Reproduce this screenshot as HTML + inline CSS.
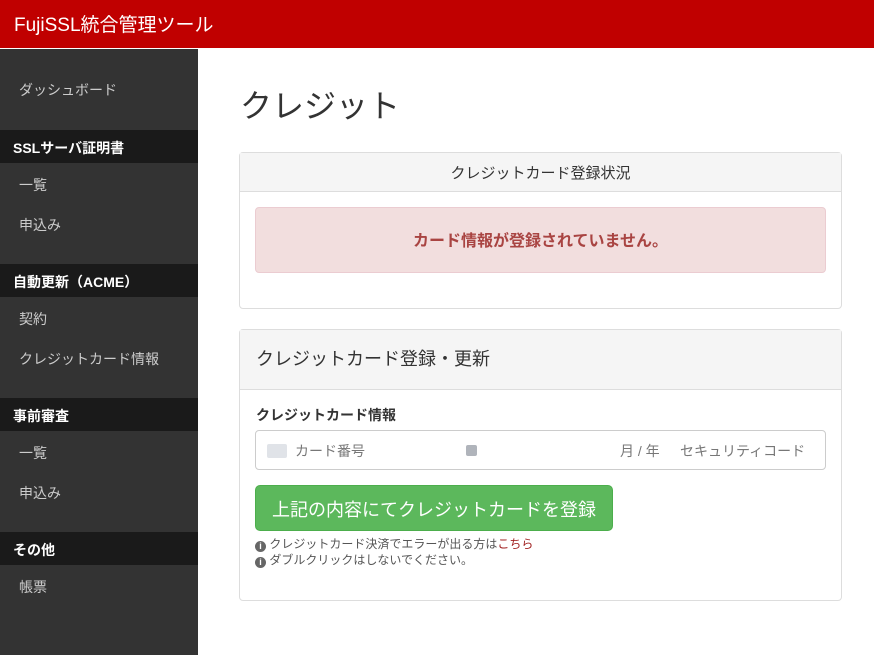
<!DOCTYPE html>
<html><head><meta charset="utf-8"><style>
*{box-sizing:border-box;margin:0;padding:0}
body{width:874px;height:655px;overflow:hidden;font-family:"Liberation Sans","Noto Sans CJK JP",sans-serif;background:#fff;color:#333;position:relative}
.top{position:absolute;left:0;top:0;width:874px;height:48px;background:#c00000;color:#fff;font-size:19px;padding:10px 0 0 14px}
.side{position:absolute;left:0;top:49px;width:198px;height:606px;background:#333}
.si{position:absolute;left:19px;color:#ccc;font-size:14px}
.sh{position:absolute;left:0;width:198px;height:33px;background:#1a1a1a;color:#fff;font-size:14px;font-weight:bold;padding:8px 0 0 13px}
.abs{position:absolute}
h1{position:absolute;left:240px;top:81px;font-size:32px;font-weight:normal;color:#333}
.panel{position:absolute;left:239px;width:603px;border:1px solid #ddd;border-radius:4px;background:#fff}
.ph{background:#f5f5f5;border-bottom:1px solid #ddd}
</style></head><body>
<div class="top">FujiSSL統合管理ツール</div>
<div class="side">
<div class="si" style="top:31px">ダッシュボード</div>
<div class="sh" style="top:81px">SSLサーバ証明書</div>
<div class="si" style="top:126px">一覧</div>
<div class="si" style="top:166px">申込み</div>
<div class="sh" style="top:215px">自動更新（ACME）</div>
<div class="si" style="top:260px">契約</div>
<div class="si" style="top:300px">クレジットカード情報</div>
<div class="sh" style="top:349px">事前審査</div>
<div class="si" style="top:394px">一覧</div>
<div class="si" style="top:434px">申込み</div>
<div class="sh" style="top:483px">その他</div>
<div class="si" style="top:528px">帳票</div>
</div>
<h1>クレジット</h1>
<div class="panel" style="top:152px;height:157px">
<div class="ph" style="height:39px;text-align:center;font-size:15px;padding-top:9px">クレジットカード登録状況</div>
<div class="abs" style="left:15px;top:54px;width:571px;height:66px;background:#f2dede;border:1px solid #ebccd1;border-radius:4px;color:#a94442;font-weight:bold;font-size:16px;text-align:center;padding-top:19px">カード情報が登録されていません。</div>
</div>
<div class="panel" style="top:329px;height:272px">
<div class="ph" style="height:60px;font-size:18px;padding:15px 0 0 16px">クレジットカード登録・更新</div>
<div class="abs" style="left:16px;top:75px;font-size:14px;font-weight:bold">クレジットカード情報</div>
<div class="abs" style="left:15px;top:100px;width:571px;height:40px;border:1px solid #ccc;border-radius:4px;font-size:14px;color:#777">
<div class="abs" style="left:11px;top:13px;width:20px;height:14px;background:#e0e3e8;border-radius:2px"></div>
<div class="abs" style="left:39px;top:10px">カード番号</div>
<div class="abs" style="left:210px;top:14px;width:11px;height:11px;background:#b0b4bb;border-radius:2px"></div>
<div class="abs" style="left:364px;top:10px">月 / 年</div>
<div class="abs" style="left:424px;top:10px">セキュリティコード</div>
</div>
<div class="abs" style="left:15px;top:155px;width:358px;height:46px;background:#5cb85c;border:1px solid #4cae4c;border-radius:5px;color:#fff;font-size:18px;text-align:center;padding-top:10px">上記の内容にてクレジットカードを登録</div>
<div class="abs" style="left:15px;top:206px;font-size:12px;color:#555;line-height:16px">
<div><span style="display:inline-block;width:11px;height:11px;border-radius:50%;background:#666;color:#fff;font-size:9px;text-align:center;line-height:11px;font-weight:bold;vertical-align:-1px">i</span> クレジットカード決済でエラーが出る方は<span style="color:#a02020">こちら</span></div>
<div><span style="display:inline-block;width:11px;height:11px;border-radius:50%;background:#666;color:#fff;font-size:9px;text-align:center;line-height:11px;font-weight:bold;vertical-align:-1px">i</span> ダブルクリックはしないでください。</div>
</div>
</div>
</body></html>
